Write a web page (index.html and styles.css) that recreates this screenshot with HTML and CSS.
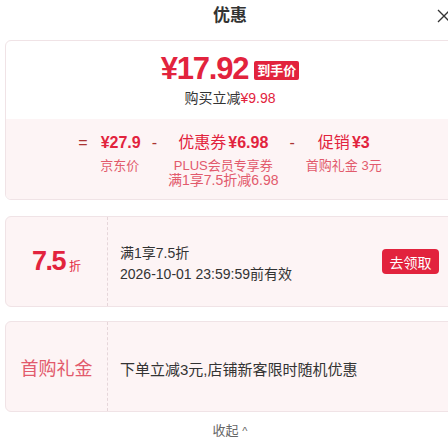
FILE: index.html
```html
<!DOCTYPE html>
<html lang="zh-CN">
<head>
    <meta charset="UTF-8">
    <meta name="viewport" content="width=device-width, initial-scale=1.0">
    <title>优惠</title>
    <link rel="stylesheet" href="styles.css">
</head>
<body>
    <div class="popup">
        <div class="popup-head">
            <span class="popup-title">优惠</span>
            <span class="popup-close">
                <svg width="14" height="14" viewBox="0 0 14 14"><path d="M1 1L13 13M13 1L1 13" stroke="#333" stroke-width="1.3" fill="none"/></svg>
            </span>
        </div>

        <div class="summary">
            <div class="summary-top">
                <div class="final-price">
                    <span class="price">¥17.92</span>
                    <span class="tag">到手价</span>
                </div>
                <div class="saving">购买立减<em>¥9.98</em></div>
            </div>
            <div class="formula">
                <span class="op">=</span>
                <div class="term">
                    <div class="term-val"><b>¥27.9</b></div>
                    <div class="term-lbl">京东价</div>
                </div>
                <span class="op">-</span>
                <div class="term">
                    <div class="term-val">优惠券<b>¥6.98</b></div>
                    <div class="term-lbl">PLUS会员专享券</div>
                    <div class="term-lbl term-sub">满1享7.5折减6.98</div>
                </div>
                <span class="op">-</span>
                <div class="term">
                    <div class="term-val">促销<b>¥3</b></div>
                    <div class="term-lbl">首购礼金 3元</div>
                </div>
            </div>
        </div>

        <div class="card">
            <div class="card-left">
                <span class="discount">7.5</span><span class="discount-unit">折</span>
            </div>
            <div class="card-body">
                <div class="card-line">满1享7.5折</div>
                <div class="card-line">2026-10-01 23:59:59前有效</div>
            </div>
            <button class="get-btn">去领取</button>
        </div>

        <div class="card">
            <div class="card-left">
                <span class="gift">首购礼金</span>
            </div>
            <div class="card-body">
                <div class="card-text">下单立减3元,店铺新客限时随机优惠</div>
            </div>
        </div>

        <div class="fold">收起 <span class="fold-arrow">^</span></div>
    </div>
</body>
</html>
```

FILE: styles.css
```css
:root {
    --red: #e2233d;
    --red-light: #e25a6c;
    --pink-bg: #fdf4f5;
    --line: #f0e3e6;
    --text: #333;
}

body {
    margin: 0;
    background: #fff;
    font-family: "Liberation Sans", "Noto Sans CJK SC", sans-serif;
    color: var(--text);
    overflow: hidden;
}
.popup {
    width: 460px;
}
.popup-head {
    height: 40px;
    display: flex;
    justify-content: center;
    position: relative;
}
.popup-title {
    font-size: 17px;
    font-weight: bold;
    line-height: 31px;
}
.popup-close {
    position: absolute;
    top: 9px;
    left: 437px;
}
.summary {
    margin: 0 5px;
    border: 1px solid var(--line);
    border-radius: 6px;
    overflow: hidden;
}
.summary-top {
    height: 78px;
    display: flex;
    flex-direction: column;
    align-items: center;
    padding-top: 10px;
    box-sizing: border-box;
}
.final-price {
    display: flex;
    align-items: flex-end;
    gap: 6px;
}
.price {
    font-size: 31px;
    font-weight: bold;
    color: var(--red);
    line-height: 36px;
    letter-spacing: -1.2px;
}
.tag {
    background: var(--red);
    color: #fff;
    font-size: 13px;
    font-weight: bold;
    line-height: 19px;
    padding: 0 3px;
    border-radius: 2px;
    margin-bottom: 7px;
}
.saving {
    font-size: 14px;
    line-height: 20px;
    margin-top: 1px;
}
.saving em {
    font-style: normal;
    color: var(--red);
}
.formula {
    background: var(--pink-bg);
    height: 80px;
    display: flex;
    justify-content: center;
    align-items: flex-start;
    padding-top: 14px;
    box-sizing: border-box;
    gap: 11px;
}
.op {
    font-size: 16px;
    line-height: 20px;
    color: #a33;
}
.term {
    text-align: center;
    color: var(--red);
}
.term-val {
    font-size: 16px;
    line-height: 20px;
}
.term-val b {
    margin-left: 2px;
}
.term-lbl {
    font-size: 13px;
    line-height: 14px;
    color: var(--red-light);
    margin-top: 6px;
    white-space: nowrap;
}
.term-sub {
    font-size: 14px;
    margin-top: 0;
}
.card {
    margin: 16px 5px 0;
    height: 91px;
    border: 1px solid var(--line);
    border-radius: 6px;
    background: var(--pink-bg);
    display: flex;
    align-items: center;
    box-sizing: border-box;
}
.card + .card {
    margin-top: 14px;
}
.card-left {
    width: 101px;
    height: 100%;
    border-right: 1px dashed #e6d6da;
    display: flex;
    align-items: center;
    justify-content: center;
    color: var(--red);
}
.discount {
    font-size: 27px;
    font-weight: bold;
    letter-spacing: -1.5px;
}
.discount-unit {
    font-size: 12px;
    margin: 8px 0 0 4px;
}
.gift {
    font-size: 18px;
    color: var(--red-light);
}
.card-body {
    flex: 1;
    padding: 4px 0 0 12px;
}
.card-line {
    font-size: 14px;
    line-height: 21px;
}
.card-text {
    font-size: 15px;
}
.get-btn {
    background: var(--red);
    color: #fff;
    border: none;
    border-radius: 4px;
    font-family: inherit;
    font-size: 14px;
    width: 57px;
    height: 25px;
    padding: 0;
    margin-right: 15px;
}
.fold {
    text-align: center;
    font-size: 13px;
    line-height: 16px;
    color: #666;
    margin-top: 11px;
}
.fold-arrow {
    font-size: 11px;
}
```
